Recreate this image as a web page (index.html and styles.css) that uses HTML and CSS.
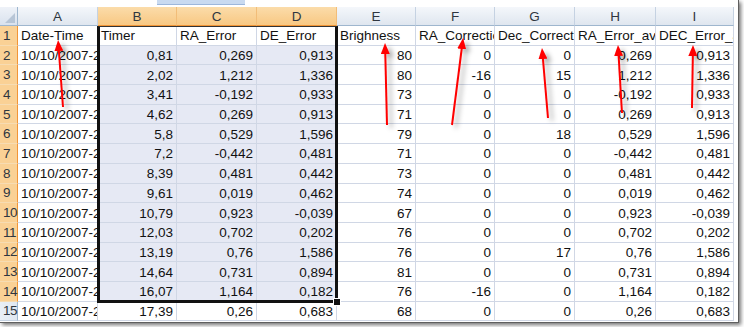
FILE: index.html
```html
<!DOCTYPE html>
<html>
<head>
<meta charset="utf-8">
<link rel="stylesheet" href="styles.css">
</head>
<body>
<div class="frame">
  <div class="topbar"><div class="tab"></div></div>
  <div class="sheet">
    <div class="corner"><span class="tri"></span></div>
    <div class="hc">A</div><div class="hc s">B</div><div class="hc s">C</div><div class="hc s">D</div><div class="hc">E</div><div class="hc">F</div><div class="hc">G</div><div class="hc">H</div><div class="hc">I</div>

    <div class="rh s">1</div><div class="c">Date-Time</div><div class="c">Timer</div><div class="c">RA_Error</div><div class="c">DE_Error</div><div class="c">Brighness</div><div class="c">RA_Correction</div><div class="c">Dec_Correction</div><div class="c">RA_Error_avg</div><div class="c">DEC_Error_avg</div>

    <div class="rh s">2</div><div class="c">10/10/2007-21:31</div><div class="c n f">0,81</div><div class="c n f">0,269</div><div class="c n f">0,913</div><div class="c n">80</div><div class="c n">0</div><div class="c n">0</div><div class="c n">0,269</div><div class="c n">0,913</div>
    <div class="rh s">3</div><div class="c">10/10/2007-21:31</div><div class="c n f">2,02</div><div class="c n f">1,212</div><div class="c n f">1,336</div><div class="c n">80</div><div class="c n">-16</div><div class="c n">15</div><div class="c n">1,212</div><div class="c n">1,336</div>
    <div class="rh s">4</div><div class="c">10/10/2007-21:31</div><div class="c n f">3,41</div><div class="c n f">-0,192</div><div class="c n f">0,933</div><div class="c n">73</div><div class="c n">0</div><div class="c n">0</div><div class="c n">-0,192</div><div class="c n">0,933</div>
    <div class="rh s">5</div><div class="c">10/10/2007-21:31</div><div class="c n f">4,62</div><div class="c n f">0,269</div><div class="c n f">0,913</div><div class="c n">71</div><div class="c n">0</div><div class="c n">0</div><div class="c n">0,269</div><div class="c n">0,913</div>
    <div class="rh s">6</div><div class="c">10/10/2007-21:31</div><div class="c n f">5,8</div><div class="c n f">0,529</div><div class="c n f">1,596</div><div class="c n">79</div><div class="c n">0</div><div class="c n">18</div><div class="c n">0,529</div><div class="c n">1,596</div>
    <div class="rh s">7</div><div class="c">10/10/2007-21:31</div><div class="c n f">7,2</div><div class="c n f">-0,442</div><div class="c n f">0,481</div><div class="c n">71</div><div class="c n">0</div><div class="c n">0</div><div class="c n">-0,442</div><div class="c n">0,481</div>
    <div class="rh s">8</div><div class="c">10/10/2007-21:31</div><div class="c n f">8,39</div><div class="c n f">0,481</div><div class="c n f">0,442</div><div class="c n">73</div><div class="c n">0</div><div class="c n">0</div><div class="c n">0,481</div><div class="c n">0,442</div>
    <div class="rh s">9</div><div class="c">10/10/2007-21:31</div><div class="c n f">9,61</div><div class="c n f">0,019</div><div class="c n f">0,462</div><div class="c n">74</div><div class="c n">0</div><div class="c n">0</div><div class="c n">0,019</div><div class="c n">0,462</div>
    <div class="rh s">10</div><div class="c">10/10/2007-21:31</div><div class="c n f">10,79</div><div class="c n f">0,923</div><div class="c n f">-0,039</div><div class="c n">67</div><div class="c n">0</div><div class="c n">0</div><div class="c n">0,923</div><div class="c n">-0,039</div>
    <div class="rh s">11</div><div class="c">10/10/2007-21:31</div><div class="c n f">12,03</div><div class="c n f">0,702</div><div class="c n f">0,202</div><div class="c n">76</div><div class="c n">0</div><div class="c n">0</div><div class="c n">0,702</div><div class="c n">0,202</div>
    <div class="rh s">12</div><div class="c">10/10/2007-21:31</div><div class="c n f">13,19</div><div class="c n f">0,76</div><div class="c n f">1,586</div><div class="c n">76</div><div class="c n">0</div><div class="c n">17</div><div class="c n">0,76</div><div class="c n">1,586</div>
    <div class="rh s">13</div><div class="c">10/10/2007-21:31</div><div class="c n f">14,64</div><div class="c n f">0,731</div><div class="c n f">0,894</div><div class="c n">81</div><div class="c n">0</div><div class="c n">0</div><div class="c n">0,731</div><div class="c n">0,894</div>
    <div class="rh s">14</div><div class="c">10/10/2007-21:31</div><div class="c n f">16,07</div><div class="c n f">1,164</div><div class="c n f">0,182</div><div class="c n">76</div><div class="c n">-16</div><div class="c n">0</div><div class="c n">1,164</div><div class="c n">0,182</div>
    <div class="rh">15</div><div class="c">10/10/2007-21:31</div><div class="c n">17,39</div><div class="c n">0,26</div><div class="c n">0,683</div><div class="c n">68</div><div class="c n">0</div><div class="c n">0</div><div class="c n">0,26</div><div class="c n">0,683</div>
  </div>
  <div class="selbox"><span class="handle"></span></div>
</div>
<svg class="arrows" width="744" height="327" viewBox="0 0 744 327">
  <defs>
    <marker id="ah" viewBox="0 0 11 9" refX="4" refY="4.5" markerWidth="11" markerHeight="9" markerUnits="userSpaceOnUse" orient="auto">
      <path d="M0 0 L11 4.5 L0 9 Z" fill="#ff0000"/>
    </marker>
    <filter id="sh" x="-50%" y="-20%" width="200%" height="140%">
      <feDropShadow dx="4" dy="3" stdDeviation="2.5" flood-color="#000" flood-opacity="0.35"/>
    </filter>
  </defs>
  <g stroke="#ff0000" stroke-width="2" fill="none" marker-end="url(#ah)" filter="url(#sh)">
    <line x1="63" y1="107" x2="58.6" y2="47"/>
    <line x1="387" y1="125" x2="385.2" y2="50"/>
    <line x1="452" y1="125" x2="462.2" y2="45"/>
    <line x1="548" y1="118" x2="542.6" y2="55"/>
    <line x1="622" y1="113" x2="618.4" y2="52"/>
    <line x1="692" y1="108" x2="692.9" y2="52"/>
  </g>
</svg>
</body>
</html>
```

FILE: styles.css
```css
html, body {
  margin: 0;
  padding: 0;
  background: #ffffff;
}
body {
  width: 744px;
  height: 327px;
  overflow: hidden;
  position: relative;
  font-family: "Liberation Sans", Arial, sans-serif;
}
.frame {
  position: relative;
  width: 738px;
  height: 322px;
  background: #ffffff;
  border-right: 1px solid #5f5f5f;
  border-bottom: 1px solid #5f5f5f;
  box-shadow: 2px 2px 4px rgba(0, 0, 0, 0.55);
  overflow: hidden;
}
.topbar {
  height: 7px;
  display: flex;
  background: #ffffff;
}
.tab {
  margin-left: 157px;
  width: 88px;
  height: 4px;
  background: #c9daf0;
  border-bottom: 1px solid #9db7db;
}
.sheet {
  display: grid;
  grid-template-columns: 18px 80px 79px 80px 80px 79px 79px 80px 81px 78px;
  grid-template-rows: 19px repeat(15, 19.7px);
  width: 734px;
  font-size: 13.5px;
  color: #111;
}
.corner {
  position: relative;
  background: linear-gradient(#eef2f8, #d9e2ee);
  border-right: 1px solid #9eb6ce;
  border-bottom: 1px solid #9eb6ce;
  box-sizing: border-box;
}
.tri {
  position: absolute;
  right: 2px;
  bottom: 2px;
  width: 0;
  height: 0;
  border-left: 10px solid transparent;
  border-bottom: 10px solid #b7c5d6;
}
.hc {
  box-sizing: border-box;
  background: linear-gradient(#f4f7fb, #dfe6ef);
  border-right: 1px solid #c5d2e2;
  border-bottom: 1px solid #9eb6ce;
  display: flex;
  align-items: center;
  justify-content: center;
  color: #2f3640;
  font-size: 13.5px;
}
.hc.s {
  background: linear-gradient(#fbdcaa, #f8c883);
  border-right: 1px solid #f2bd78;
  border-bottom: 1px solid #f29536;
}
.rh {
  box-sizing: border-box;
  background: linear-gradient(90deg, #e9eff7, #dfe7f1);
  border-right: 1px solid #9eb6ce;
  border-bottom: 1px solid #c5d2e2;
  display: flex;
  align-items: center;
  padding-left: 3px;
  color: #2f3640;
  font-size: 13.5px;
  letter-spacing: -0.6px;
}
.rh.s {
  background: #fad195;
  border-right: 1px solid #f29536;
  border-bottom: 1px solid #f7dcb2;
}
.c {
  box-sizing: border-box;
  border-right: 1px solid #d0d7e5;
  border-bottom: 1px solid #d0d7e5;
  padding: 1px 3px 0;
  display: flex;
  align-items: center;
  white-space: nowrap;
  overflow: hidden;
  background: #ffffff;
}
.c.n {
  justify-content: flex-end;
}
.c.f {
  background: #e6e9f4;
}
.selbox {
  position: absolute;
  left: 97px;
  top: 26px;
  width: 241px;
  height: 277px;
  box-sizing: border-box;
  border: 3px solid #111111;
  border-top: 1px solid #333333;
  pointer-events: none;
}
.handle {
  position: absolute;
  right: -6px;
  bottom: -6px;
  width: 6px;
  height: 6px;
  background: #111111;
  border: 1px solid #ffffff;
}
.arrows {
  position: absolute;
  left: 0;
  top: 0;
  pointer-events: none;
}
```
